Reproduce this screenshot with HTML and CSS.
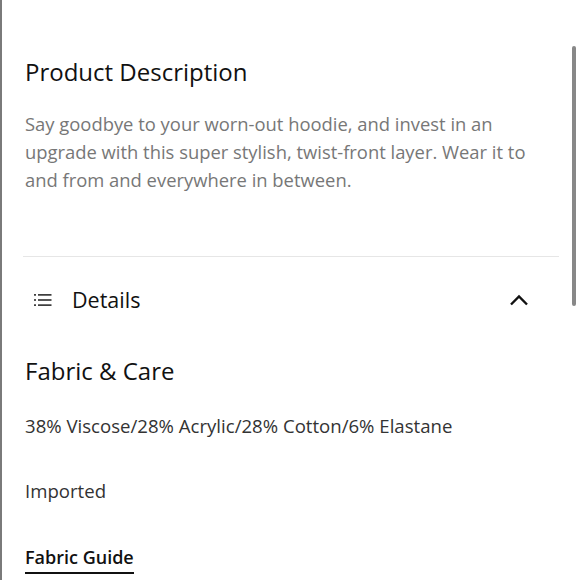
FILE: index.html
```html
<!DOCTYPE html>
<html>
<head>
<meta charset="utf-8">
<link rel="stylesheet" href="styles.css">
</head>
<body>
<div class="frame">
  <main class="content">
    <h1 class="title">Product Description</h1>
    <p class="desc">Say goodbye to your worn-out hoodie, and invest in an upgrade with this super stylish, twist-front layer. Wear it to and from and everywhere in between.</p>
    <hr class="divider">
    <div class="acc-head">
      <svg class="list-icon" width="18" height="14" viewBox="0 0 18 14">
        <rect x="0" y="1.2" width="2" height="1.4" fill="#111"/>
        <rect x="4" y="1.2" width="13.5" height="1.4" fill="#111"/>
        <rect x="0" y="6.3" width="2" height="1.4" fill="#111"/>
        <rect x="4" y="6.3" width="13.5" height="1.4" fill="#111"/>
        <rect x="0" y="11.4" width="2" height="1.4" fill="#111"/>
        <rect x="4" y="11.4" width="13.5" height="1.4" fill="#111"/>
      </svg>
      <span class="acc-label">Details</span>
      <svg class="chev" width="20" height="12" viewBox="0 0 20 12">
        <path d="M2 10.5 L10 2.5 L18 10.5" fill="none" stroke="#111" stroke-width="2.4"/>
      </svg>
    </div>
    <h2 class="sub">Fabric &amp; Care</h2>
    <p class="body">38% Viscose/28% Acrylic/28% Cotton/6% Elastane</p>
    <p class="body">Imported</p>
    <a class="guide" href="#">Fabric Guide</a>
  </main>
  <div class="scrollbar"></div>
</div>
</body>
</html>
```
FILE: styles.css
```css
html, body {
  margin: 0;
  padding: 0;
  background: #fff;
}
body {
  font-family: "Open Sans", "Noto Sans", sans-serif;
  color: #111;
}
.frame {
  position: relative;
  width: 580px;
  height: 580px;
  overflow: hidden;
  border-left: 2px solid #7a7a7a;
  box-sizing: border-box;
}
.content {
  padding: 0 21px 0 23px;
  box-sizing: border-box;
}
.title {
  margin: 0;
  padding-top: 56px;
  font-size: 24px;
  font-weight: 500;
  line-height: 32px;
}
.desc {
  margin: 22px 0 0;
  padding-right: 20px;
  font-size: 18.4px;
  line-height: 28px;
  color: #777;
}
.divider {
  border: 0;
  border-top: 1px solid #e6e6e6;
  margin: 62px 0 0 -2px;
}
.acc-head {
  display: flex;
  align-items: center;
  height: 85px;
  padding-left: 9px;
  padding-right: 30px;
}
.list-icon { flex: none; }
.acc-label {
  margin-left: 20px;
  font-size: 21.5px;
  flex: 1;
}
.sub {
  margin: 13px 0 0;
  font-size: 24px;
  font-weight: 500;
  line-height: 32px;
}
.body {
  margin: 26px 0 0;
  font-size: 18.6px;
  line-height: 26px;
  color: #333;
}
.body + .body { margin-top: 39px; }
.guide {
  display: inline-block;
  margin-top: 39px;
  font-size: 18px;
  font-weight: 600;
  color: #111;
  text-decoration: none;
  border-bottom: 2px solid #111;
  line-height: 29px;
}
.scrollbar {
  position: absolute;
  right: 4px;
  top: 46px;
  width: 4px;
  height: 260px;
  border-radius: 2px;
  background: #888;
}
```
